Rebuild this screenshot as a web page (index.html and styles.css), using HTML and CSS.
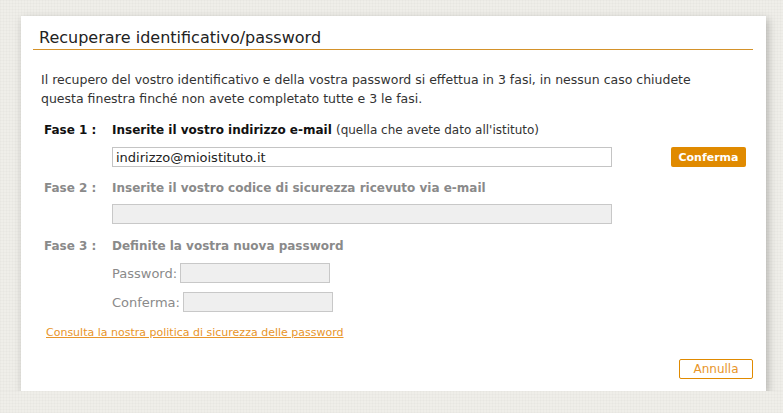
FILE: index.html
```html
<!DOCTYPE html>
<html lang="it">
<head>
  <meta charset="UTF-8" />
  <meta name="viewport" content="width=device-width, initial-scale=1.0" />
  <title>Recuperare identificativo/password</title>
  <link rel="stylesheet" href="styles.css">
</head>
<body>
  <div class="dialog">
    <h2 class="dialog-title">Recuperare identificativo/password</h2>
    <p class="intro">Il recupero del vostro identificativo e della vostra password si effettua in 3 fasi, in nessun caso chiudete questa finestra finché non avete completato tutte e 3 le fasi.</p>

    <div class="step">
      <div class="step-head">
        <span class="step-label">Fase 1 :</span>
        <span class="step-text">Inserite il vostro indirizzo e-mail <span class="normal">(quella che avete dato all'istituto)</span></span>
      </div>
      <div class="step-body">
        <input type="text" class="field wide" value="indirizzo@mioistituto.it" />
        <button class="btn-primary">Conferma</button>
      </div>
    </div>

    <div class="step disabled">
      <div class="step-head">
        <span class="step-label">Fase 2 :</span>
        <span class="step-text">Inserite il vostro codice di sicurezza ricevuto via e-mail</span>
      </div>
      <div class="step-body">
        <input type="text" class="field wide" disabled />
      </div>
    </div>

    <div class="step disabled step-last">
      <div class="step-head">
        <span class="step-label">Fase 3 :</span>
        <span class="step-text">Definite la vostra nuova password</span>
      </div>
      <div class="pw-row">
        <label>Password:</label>
        <input type="password" class="field small" disabled />
      </div>
      <div class="pw-row">
        <label>Conferma:</label>
        <input type="password" class="field small" disabled />
      </div>
    </div>

    <a href="#" class="policy">Consulta la nostra politica di sicurezza delle password</a>

    <div class="dialog-foot">
      <button class="btn-outline">Annulla</button>
    </div>
  </div>
</body>
</html>
```

FILE: styles.css
```css
body {
  margin: 0;
  font-family: 'DejaVu Sans', sans-serif;
  background: #efeee9;
  background-image: repeating-linear-gradient(0deg, rgba(0,0,0,0.015) 0 1px, transparent 1px 3px),
                    repeating-linear-gradient(90deg, rgba(0,0,0,0.015) 0 1px, transparent 1px 3px);
  color: #333;
}
.dialog {
  box-sizing: border-box;
  width: 745px;
  height: 375px;
  margin: 16px 0 0 21px;
  padding: 12px 13px 0 12px;
  background: white;
  box-shadow: 2px 3px 8px rgba(0,0,0,0.25);
}
.dialog-title {
  margin: 0;
  padding: 0 6px 1px;
  font-size: 16px;
  line-height: 20px;
  font-weight: normal;
  color: #222;
  border-bottom: 1px solid #d4922a;
}
.intro {
  max-width: 680px;
  margin: 20px 0 0 8px;
  font-size: 12.5px;
  line-height: 19px;
  color: #333;
}
.step {
  margin: 13px 0 0 11px;
}
.step + .step {
  margin-top: 12px;
}
.step-head {
  display: flex;
  font-size: 12px;
  line-height: 18px;
  font-weight: bold;
  color: #111;
}
.step-label {
  width: 68px;
}
.normal {
  font-weight: normal;
  color: #333;
}
.step-body {
  display: flex;
  align-items: center;
  margin: 8px 0 0 68px;
}
.disabled .step-body {
  margin-top: 7px;
}
.field {
  box-sizing: border-box;
  height: 20px;
  padding: 0 3px;
  font-family: inherit;
  font-size: 13px;
  color: #222;
  border: 1px solid #c4c4c4;
  background: white;
  outline: none;
}
.field:disabled {
  background: #efefef;
  border-color: #c8c8c8;
}
.wide {
  width: 500px;
}
.small {
  width: 150px;
}
.btn-primary {
  margin-left: 59px;
  width: 75px;
  height: 20px;
  padding: 0;
  font-family: inherit;
  font-size: 11px;
  font-weight: bold;
  color: white;
  background: #e08a00;
  border: none;
  border-radius: 2px;
}
.disabled .step-head,
.disabled .step-head .normal {
  color: #8a8a8a;
}
.step + .step-last {
  margin-top: 13px;
}
.pw-row {
  display: flex;
  align-items: center;
  gap: 3px;
  margin: 8px 0 0 68px;
  font-size: 13px;
  color: #8a8a8a;
}
.pw-row + .pw-row {
  margin-top: 9px;
}
.policy {
  display: inline-block;
  margin: 14px 0 0 13px;
  font-size: 11px;
  color: #e8952a;
}
.dialog-foot {
  display: flex;
  justify-content: flex-end;
  margin-top: 19px;
}
.btn-outline {
  width: 74px;
  height: 20px;
  padding: 0;
  font-family: inherit;
  font-size: 12px;
  color: #e8952a;
  background: white;
  border: 1px solid #e08a00;
  border-radius: 2px;
}
```
